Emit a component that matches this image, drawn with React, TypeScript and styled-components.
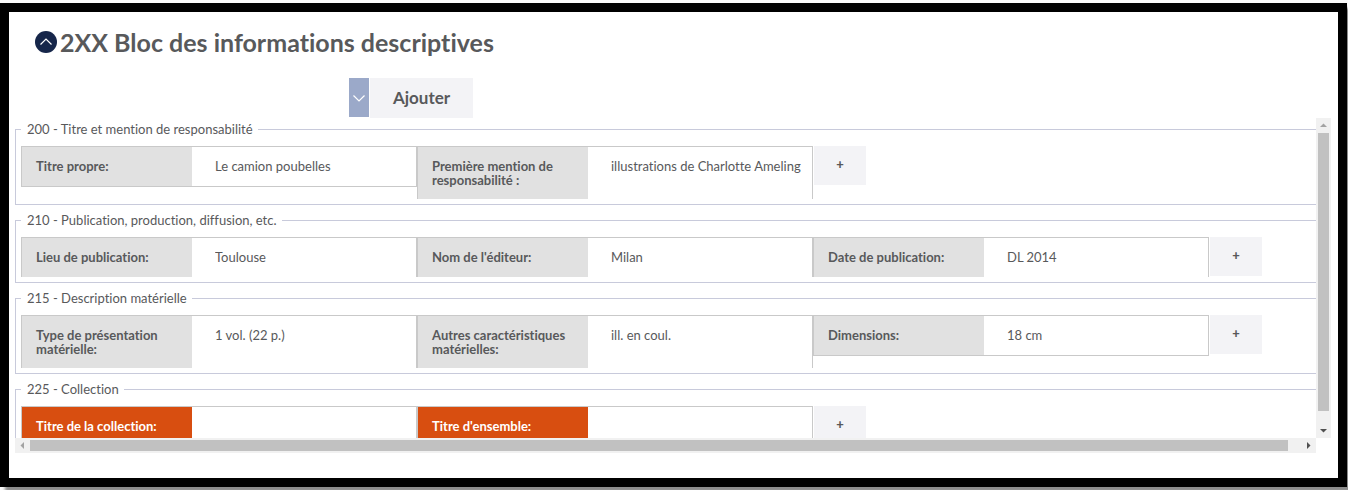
import React, { useId } from "react";
import styled, { createGlobalStyle } from "styled-components";

const GlobalStyle = createGlobalStyle`
  *, *::before, *::after { box-sizing: border-box; }
  body {
    margin: 0;
    background: #fafafa;
    color: #58595b;
    font-family: Lato, "Open Sans", sans-serif;
    font-size: 13px;
    font-variant-ligatures: none;
    overflow: hidden;
  }
  button, input { font: inherit; font-variant-ligatures: none; color: inherit; }
`;

const Page = styled.div`
  padding: 3px 1px 3px 0;
`;

const Panel = styled.main`
  padding: 14px 7px 25px 6px;
  border: 9px solid #000;
  background: #fff;
  box-shadow: 5px 5px 3px #8c8c8c;
`;

const Header = styled.header`
  display: flex;
  align-items: center;
  gap: 3px;
  height: 32px;
  padding-left: 20px;
`;

const CollapseButton = styled.button`
  display: flex;
  flex: none;
  align-items: center;
  justify-content: center;
  width: 22px;
  height: 22px;
  padding: 0;
  border: 0;
  border-radius: 50%;
  background: #16264a;
  color: #fff;
`;

const Title = styled.h1`
  margin: 0;
  font-size: 25px;
  line-height: 30px;
  font-weight: 700;
`;

const Toolbar = styled.div`
  display: flex;
  gap: 1px;
  height: 40px;
  margin: 20px 0 0 334px;
`;

const ToggleButton = styled.button`
  display: flex;
  align-items: center;
  justify-content: center;
  width: 20px;
  height: 39px;
  padding: 0;
  border: 0;
  background: #9ba9c9;
  color: #fff;
`;

const AddButton = styled.button`
  width: 103px;
  padding: 0 0 2px;
  border: 0;
  background: #f3f3f6;
  font-size: 17px;
  font-weight: 700;
`;

const ScrollGrid = styled.div`
  display: grid;
  grid-template-columns: minmax(0, 1fr) 15px;
  grid-template-rows: 320px 15px;
`;

const Viewport = styled.div`
  display: flex;
  flex-direction: column;
  gap: 4px;
  overflow: hidden;
`;

const Group = styled.fieldset`
  flex: none;
  min-width: 1340px;
  margin: 0;
  padding: 6px 5px 5px;
  border: 1px solid #c8cadb;
`;

const Legend = styled.legend`
  padding: 0 5px 0 6px;
  line-height: 22px;
`;

const Row = styled.div`
  display: flex;
  align-items: flex-start;
`;

const Cell = styled.div<{ $closed?: boolean }>`
  display: flex;
  align-self: ${(p) => (p.$closed ? "flex-start" : "stretch")};
  width: 396px;
  border: 1px solid #c9c9c9;
  border-bottom-width: ${(p) => (p.$closed ? "1px" : "0")};
`;

const Label = styled.label<{ $alert?: boolean }>`
  flex: none;
  width: 170px;
  min-height: 39px;
  padding: 12px 14px;
  background: ${(p) => (p.$alert ? "#d84e10" : "#e1e1e1")};
  color: ${(p) => (p.$alert ? "#fff" : "inherit")};
  font-weight: 700;
  line-height: 14px;
`;

const Value = styled.input`
  flex: 1;
  min-width: 0;
  height: 39px;
  padding: 0 0 1px 23px;
  border: 0;
  outline: 0;
  background: transparent;
`;

const PlusButton = styled.button`
  width: 52px;
  height: 39px;
  margin-left: 1px;
  padding: 0 0 3px;
  border: 0;
  background: #f3f3f6;
  font-weight: 900;
  line-height: 14px;
`;

const VerticalBar = styled.div`
  display: flex;
  flex-direction: column;
  align-items: center;
  background: #f1f1f1;
`;

const HorizontalBar = styled.div`
  display: flex;
  align-items: center;
  background: #f1f1f1;
`;

const BarEnd = styled.span<{ $dim?: boolean }>`
  display: flex;
  flex: none;
  align-items: center;
  justify-content: center;
  width: 15px;
  height: 15px;
  color: ${(p) => (p.$dim ? "#a3a3a3" : "#505050")};
`;

const Track = styled.div<{ $vertical?: boolean }>`
  display: flex;
  flex: 1;
  flex-direction: ${(p) => (p.$vertical ? "column" : "row")};
`;

const Thumb = styled.div<{ $share: number; $vertical?: boolean }>`
  flex: 0 0 ${(p) => p.$share}%;
  width: ${(p) => (p.$vertical ? "11px" : "auto")};
  height: ${(p) => (p.$vertical ? "auto" : "11px")};
  background: #c1c1c1;
`;

function Chevron({ up }: { up?: boolean }) {
  return (
    <svg width="14" height="14" viewBox="0 0 14 14" fill="none" stroke="currentColor" aria-hidden="true">
      <path d={up ? "M1.5 9.5L7 4L12.5 9.5" : "M1.5 4.5L7 10L12.5 4.5"} strokeWidth="1.2" />
    </svg>
  );
}

function Arrow({ points }: { points: string }) {
  return (
    <svg width="7" height="7" viewBox="0 0 7 7" fill="currentColor" aria-hidden="true">
      <polygon points={points} />
    </svg>
  );
}

interface FieldData {
  label: string;
  value: string;
  closed?: boolean;
  alert?: boolean;
}

const groups: { legend: string; fields: FieldData[] }[] = [
  {
    legend: "200 - Titre et mention de responsabilité",
    fields: [
      { label: "Titre propre:", value: "Le camion poubelles", closed: true },
      { label: "Première mention de responsabilité :", value: "illustrations de Charlotte Ameling" },
    ],
  },
  {
    legend: "210 - Publication, production, diffusion, etc.",
    fields: [
      { label: "Lieu de publication:", value: "Toulouse" },
      { label: "Nom de l'éditeur:", value: "Milan" },
      { label: "Date de publication:", value: "DL 2014" },
    ],
  },
  {
    legend: "215 - Description matérielle",
    fields: [
      { label: "Type de présentation matérielle:", value: "1 vol. (22 p.)" },
      { label: "Autres caractéristiques matérielles:", value: "ill. en coul." },
      { label: "Dimensions:", value: "18 cm", closed: true },
    ],
  },
  {
    legend: "225 - Collection",
    fields: [
      { label: "Titre de la collection:", value: "", alert: true },
      { label: "Titre d'ensemble:", value: "", alert: true },
    ],
  },
];

function Field({ label, value, closed, alert }: FieldData) {
  const id = useId();
  return (
    <Cell $closed={closed}>
      <Label htmlFor={id} $alert={alert}>{label}</Label>
      <Value id={id} type="text" defaultValue={value} />
    </Cell>
  );
}

export default function App() {
  return (
    <Page>
      <GlobalStyle />
      <Panel>
        <Header>
          <CollapseButton type="button" aria-label="Replier le bloc"><Chevron up /></CollapseButton>
          <Title>2XX Bloc des informations descriptives</Title>
        </Header>
        <Toolbar>
          <ToggleButton type="button" aria-label="Choisir une zone"><Chevron /></ToggleButton>
          <AddButton type="button">Ajouter</AddButton>
        </Toolbar>
        <ScrollGrid>
          <Viewport>
            {groups.map((group) => (
              <Group key={group.legend}>
                <Legend>{group.legend}</Legend>
                <Row>
                  {group.fields.map((field) => (
                    <Field key={field.label} {...field} />
                  ))}
                  <PlusButton type="button">+</PlusButton>
                </Row>
              </Group>
            ))}
          </Viewport>
          <VerticalBar aria-hidden="true">
            <BarEnd $dim><Arrow points="0,5 3.5,1.5 7,5" /></BarEnd>
            <Track $vertical><Thumb $vertical $share={96} /></Track>
            <BarEnd><Arrow points="0,2 3.5,5.5 7,2" /></BarEnd>
          </VerticalBar>
          <HorizontalBar aria-hidden="true">
            <BarEnd $dim><Arrow points="5,0 1.5,3.5 5,7" /></BarEnd>
            <Track><Thumb $share={99} /></Track>
            <BarEnd><Arrow points="2,0 5.5,3.5 2,7" /></BarEnd>
          </HorizontalBar>
        </ScrollGrid>
      </Panel>
    </Page>
  );
}
